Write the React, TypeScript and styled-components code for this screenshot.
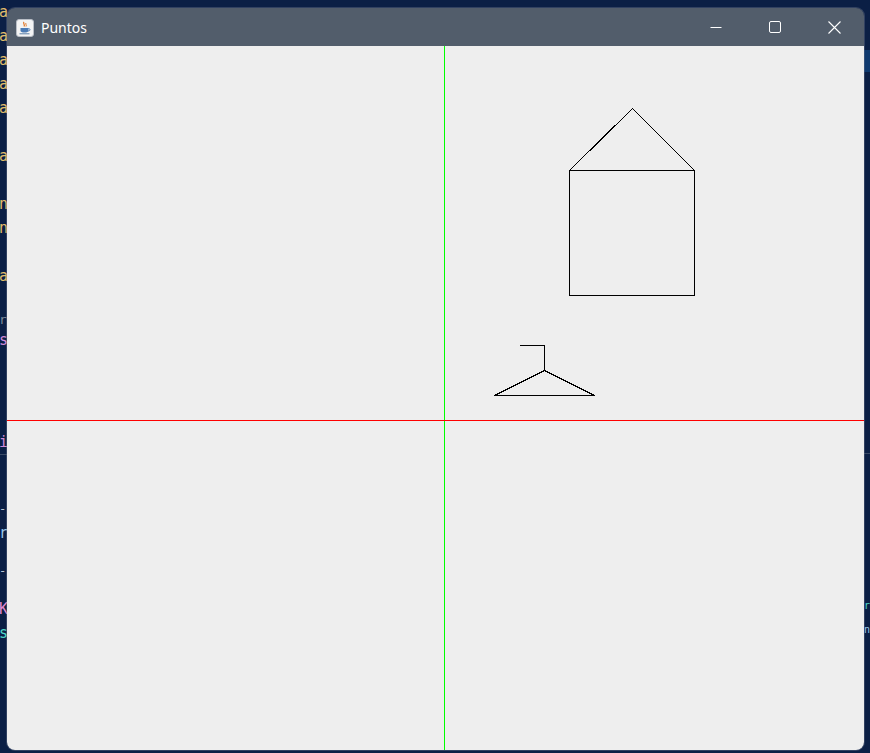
import React from "react";
import styled, { createGlobalStyle } from "styled-components";

const Global = createGlobalStyle`
  html, body { margin: 0; padding: 0; background: #0b1f45; }
  body { width: 870px; height: 753px; overflow: hidden; }
`;

const Desktop = styled.div`
  position: relative;
  width: 870px;
  height: 753px;
  background: #0b1f45;
  overflow: hidden;
  font-family: "DejaVu Sans Mono", "Liberation Mono", monospace;
`;

const EditorColumn = styled.div<{ $side: "left" | "right" }>`
  position: absolute;
  top: 0;
  bottom: 0;
  ${(p) => (p.$side === "left" ? "left: -1px;" : "left: 864px;")}
  width: ${(p) => (p.$side === "left" ? 20 : 6)}px;
  overflow: hidden;
  display: flex;
  flex-direction: column;
`;

const CodeLine = styled.div<{ $h: number; $color: string; $size?: number; $bg?: string; $pad?: number }>`
  height: ${(p) => p.$h}px;
  line-height: ${(p) => p.$h}px;
  font-size: ${(p) => p.$size ?? 15}px;
  color: ${(p) => p.$color};
  background: ${(p) => p.$bg ?? "transparent"};
  padding-left: ${(p) => p.$pad ?? 0}px;
  white-space: pre;
  flex: none;
`;

const Divider = styled.div`
  height: 1px;
  background: #3a4a66;
  flex: none;
`;

const Window = styled.div`
  position: absolute;
  left: 7px;
  top: 8px;
  width: 857px;
  height: 742px;
  border-radius: 8px;
  overflow: hidden;
  display: flex;
  flex-direction: column;
  box-shadow: 0 0 0 1px rgba(120, 130, 150, 0.35);
`;

const TitleBar = styled.div`
  height: 38px;
  flex: none;
  background: #525d6b;
  display: flex;
  align-items: center;
  color: #ffffff;
`;

const AppIcon = styled.div`
  width: 18px;
  height: 18px;
  margin-left: 9px;
  margin-top: 1px;
  display: flex;
`;

const Title = styled.span`
  margin-left: 7px;
  font-family: "Segoe UI", "Noto Sans", "Open Sans", sans-serif;
  font-size: 14px;
  color: #ffffff;
`;

const Spacer = styled.div`
  flex: 1;
`;

const CtrlButton = styled.div<{ $w: number }>`
  width: ${(p) => p.$w}px;
  height: 38px;
  display: flex;
  align-items: center;
  justify-content: center;
`;

const Canvas = styled.div`
  flex: 1;
  background: #eeeeee;
  display: flex;
`;

const leftLines: { h: number; t: string; c: string; size?: number }[] = [
  { h: 24, t: "a", c: "#e1bd6a" },
  { h: 24, t: "a", c: "#e1bd6a" },
  { h: 24, t: "a", c: "#e1bd6a" },
  { h: 24, t: "a", c: "#e1bd6a" },
  { h: 24, t: "a", c: "#e1bd6a" },
  { h: 24, t: "", c: "#e1bd6a" },
  { h: 24, t: "a", c: "#e1bd6a" },
  { h: 24, t: "", c: "#e1bd6a" },
  { h: 24, t: "n", c: "#e1bd6a" },
  { h: 24, t: "n", c: "#e1bd6a" },
  { h: 24, t: "", c: "#e1bd6a" },
  { h: 24, t: "a", c: "#e1bd6a" },
  { h: 22, t: "", c: "#e1bd6a" },
  { h: 20, t: "ra", c: "#7e8a9c", size: 13 },
  { h: 20, t: "s", c: "#d08bd8" },
  { h: 20, t: "", c: "#d08bd8" },
  { h: 20, t: "", c: "#d08bd8" },
  { h: 20, t: "", c: "#d08bd8" },
  { h: 20, t: "", c: "#d08bd8" },
  { h: 24, t: "i", c: "#d08bd8" },
];

const leftLines2: { h: number; t: string; c: string; size?: number }[] = [
  { h: 42, t: "", c: "#fff" },
  { h: 24, t: "-", c: "#b8c4d6", size: 12 },
  { h: 24, t: "ro", c: "#9cc7ea" },
  { h: 14, t: "", c: "#fff" },
  { h: 24, t: "-", c: "#b8c4d6", size: 12 },
  { h: 14, t: "", c: "#fff" },
  { h: 24, t: "K(", c: "#e08ad0" },
  { h: 24, t: "sh", c: "#4fd6c7" },
];

const rightLines2: { h: number; t: string; c: string; size?: number }[] = [
  { h: 140, t: "", c: "#fff" },
  { h: 24, t: "r", c: "#4fd6c7", size: 10 },
  { h: 24, t: "n", c: "#9cc7ea", size: 10 },
];

function JavaIcon() {
  return (
    <svg width="18" height="18" viewBox="0 0 18 18">
      <rect x="0.5" y="0.5" width="17" height="17" rx="2.5" fill="#f4f4f4" stroke="#b9bec6" />
      <path d="M8 3 C6.5 4.5 9.5 5.5 8 7.5" stroke="#e2731f" strokeWidth="1.2" fill="none" />
      <path d="M10 4 C9 5.2 11 6 10 7.5" stroke="#e2731f" strokeWidth="1" fill="none" />
      <path d="M4.5 9 H12.5 V11.5 C12.5 13 11 13.5 8.5 13.5 C6 13.5 4.5 13 4.5 11.5 Z" fill="#4b7bb5" />
      <path d="M12.5 9.5 C14.5 9.5 14.5 12 12.3 12" stroke="#4b7bb5" strokeWidth="1" fill="none" />
      <path d="M3.5 14.8 H13.5" stroke="#5a7fa8" strokeWidth="1" />
    </svg>
  );
}

export default function App() {
  const ox = 437;
  const oy = 374;
  const P = (x: number, y: number) => `${ox + x + 0.5},${oy - y + 0.5}`;
  return (
    <Desktop>
      <Global />
      <EditorColumn $side="left">
        {leftLines.map((l, i) => (
          <CodeLine key={i} $h={l.h} $color={l.c} $size={l.size}>
            {l.t}
          </CodeLine>
        ))}
        <Divider />
        {leftLines2.map((l, i) => (
          <CodeLine key={"b" + i} $h={l.h} $color={l.c} $size={l.size}>
            {l.t}
          </CodeLine>
        ))}
      </EditorColumn>
      <EditorColumn $side="right">
        <CodeLine $h={50} $color="#fff" />
        <CodeLine $h={22} $color="#fff" $bg="#0f3a6f" />
        <CodeLine $h={381} $color="#fff" />
        <Divider />
        {rightLines2.map((l, i) => (
          <CodeLine key={"r" + i} $h={l.h} $color={l.c} $size={l.size}>
            {l.t}
          </CodeLine>
        ))}
      </EditorColumn>
      <Window>
        <TitleBar>
          <AppIcon>
            <JavaIcon />
          </AppIcon>
          <Title>Puntos</Title>
          <Spacer />
          <CtrlButton $w={58}>
            <svg width="12" height="12" viewBox="0 0 12 12">
              <path d="M0.5 6.5 H11.5" stroke="#ffffff" strokeWidth="1" />
            </svg>
          </CtrlButton>
          <CtrlButton $w={59}>
            <svg width="12" height="12" viewBox="0 0 12 12">
              <rect x="0.5" y="0.5" width="11" height="11" rx="1.5" stroke="#ffffff" strokeWidth="1" fill="none" />
            </svg>
          </CtrlButton>
          <CtrlButton $w={60}>
            <svg width="13" height="13" viewBox="0 0 13 13">
              <path d="M0.5 0.5 L12.5 12.5 M12.5 0.5 L0.5 12.5" stroke="#ffffff" strokeWidth="1.1" fill="none" />
            </svg>
          </CtrlButton>
        </TitleBar>
        <Canvas>
          <svg width="857" height="704" viewBox="0 0 857 704" shapeRendering="crispEdges">
            <line x1="437.5" y1="0" x2="437.5" y2="704" stroke="#00ff00" strokeWidth="1" />
            <line x1="0" y1="374.5" x2="857" y2="374.5" stroke="#ff0000" strokeWidth="1" />
            <g stroke="#000000" strokeWidth="1" fill="none">
              <polyline points={[P(125, 125), P(250, 125), P(250, 250), P(125, 250), P(125, 125)].join(" ")} />
              <polyline points={[P(125, 250), P(188, 312), P(250, 250)].join(" ")} />
              <polyline points={[P(75, 75), P(100, 75), P(100, 50)].join(" ")} />
              <polygon points={[P(100, 50), P(50, 25), P(150, 25)].join(" ")} />
            </g>
          </svg>
        </Canvas>
      </Window>
    </Desktop>
  );
}
